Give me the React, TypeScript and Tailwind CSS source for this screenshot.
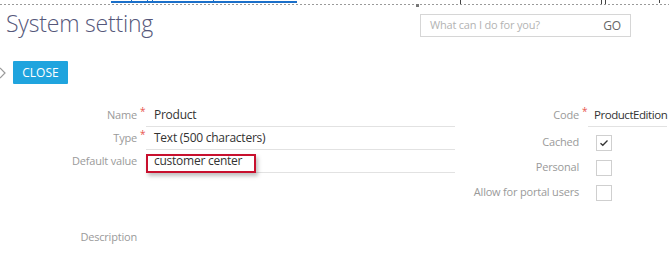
import React from "react";

const labelCls = "text-right text-[#9a9a9a] tracking-[-0.2px]";

function Star({ show = true }: { show?: boolean }) {
  return (
    <span className="w-[9px] self-start pt-[1px] pl-[3px] text-[10px] leading-[12px] text-[#e8554e]">
      {show ? "*" : ""}
    </span>
  );
}

function LeftRow({
  label,
  value,
  required = false,
  highlight = false,
}: {
  label: string;
  value: string;
  required?: boolean;
  highlight?: boolean;
}) {
  return (
    <div className="flex h-[23px] items-center">
      <div className={`w-[137px] ${labelCls}`}>{label}</div>
      <Star show={required} />
      <div className="relative flex h-full w-[309px] items-center border-b border-[#e2e2e2] pl-[8px] text-[12px] tracking-[-0.25px] text-[#333]">
        {highlight && (
          <div className="absolute left-0 top-[4px] h-[19px] w-[110px] border-2 border-[#c8102e] shadow-[2px_3px_4px_rgba(0,0,0,0.25)]" />
        )}
        <span className="relative">{value}</span>
      </div>
    </div>
  );
}

function CheckRow({ label, checked = false }: { label: string; checked?: boolean }) {
  return (
    <div className="flex h-[25px] items-center">
      <div className={`w-[124px] ${labelCls}`}>{label}</div>
      <div className="ml-[17px] flex h-[16px] w-[16px] items-center justify-center border border-[#cfcfcf] bg-white">
        {checked && (
          <svg width="10" height="8" viewBox="0 0 10 8">
            <polyline points="1.5,4.2 3.8,6.3 8.5,1.5" fill="none" stroke="#333" strokeWidth="1.3" />
          </svg>
        )}
      </div>
    </div>
  );
}

export default function App() {
  return (
    <div className="relative h-[269px] w-[669px] overflow-hidden bg-white font-['Segoe_UI','Open_Sans',sans-serif] text-[11px]">
      {/* cut-off link and dotted separator */}
      <div className="relative h-[6px]">
        <div className="absolute left-[111px] top-[1px] h-[2px] w-[186px] bg-[#1a6fc9]" />
        <div className="absolute left-[131px] top-0 h-[2px] w-[1px] bg-[#1a6fc9]" />
        <div className="absolute left-[147px] top-0 h-[2px] w-[1px] bg-[#1a6fc9]" />
        <div className="absolute left-[152px] top-0 h-[2px] w-[1px] bg-[#1a6fc9]" />
        <div className="absolute left-[213px] top-0 h-[2px] w-[1px] bg-[#1a6fc9]" />
        <div className="absolute left-0 top-[4px] h-[1px] w-full bg-[repeating-linear-gradient(90deg,#9a9a9a_0_2px,transparent_2px_4px)]" />
        <div className="absolute left-[416px] top-[4px] h-[3px] w-[3px] bg-[#777]" />
        <div className="absolute left-[460px] top-0 h-[4px] w-[1px] bg-[#444]" />
        <div className="absolute left-[601px] top-0 h-[4px] w-[1px] bg-[#444]" />
        <div className="absolute left-[605px] top-0 h-[4px] w-[1px] bg-[#444]" />
        <div className="absolute left-[659px] top-0 h-[3px] w-[1px] bg-[#444]" />
      </div>

      {/* header */}
      <div className="flex h-[34px] items-start">
        <h1 className="pl-[6px] pt-[3px] text-[23px] font-light leading-[28px] tracking-[-0.2px] text-[#55577a]">
          System setting
        </h1>
        <div className="ml-auto mr-[38px] mt-[8px] flex h-[23px] w-[211px] items-center border border-[#d6d6d6] pl-[9px] pr-[9px] tracking-[-0.2px]">
          <span className="text-[#b3b3b3]">What can I do for you?</span>
          <span className="ml-auto text-[12px] text-[#666]">GO</span>
        </div>
      </div>

      {/* action bar */}
      <div className="mt-[21px] flex h-[23px] items-center">
        <svg width="7" height="12" viewBox="0 0 7 12" className="ml-[-1px]">
          <polyline points="1,1 6,6 1,11" fill="none" stroke="#9a9a9a" strokeWidth="1.2" />
        </svg>
        <button className="ml-[7px] flex h-[23px] w-[55px] items-center justify-center rounded-[1px] bg-[#1fa4de] text-[12px] text-white">
          CLOSE
        </button>
      </div>

      {/* form */}
      <div className="mt-[20px] flex">
        <div className="flex flex-col">
          <LeftRow label="Name" value="Product" required />
          <LeftRow label="Type" value="Text (500 characters)" required />
          <LeftRow label="Default value" value="customer center" highlight />
        </div>
        <div className="flex flex-col">
          <div className="flex h-[23px] items-center">
            <div className={`w-[124px] ${labelCls}`}>Code</div>
            <Star />
            <div className="flex h-full flex-1 items-center whitespace-nowrap border-b border-[#e2e2e2] pl-[6px] text-[11.5px] tracking-[-0.45px] text-[#333]">
              ProductEdition
            </div>
          </div>
          <div className="mt-[3px]">
            <CheckRow label="Cached" checked />
            <CheckRow label="Personal" />
            <CheckRow label="Allow for portal users" />
          </div>
        </div>
      </div>

      <div className="mt-[24px] flex">
        <div className={`w-[137px] ${labelCls}`}>Description</div>
      </div>
    </div>
  );
}
